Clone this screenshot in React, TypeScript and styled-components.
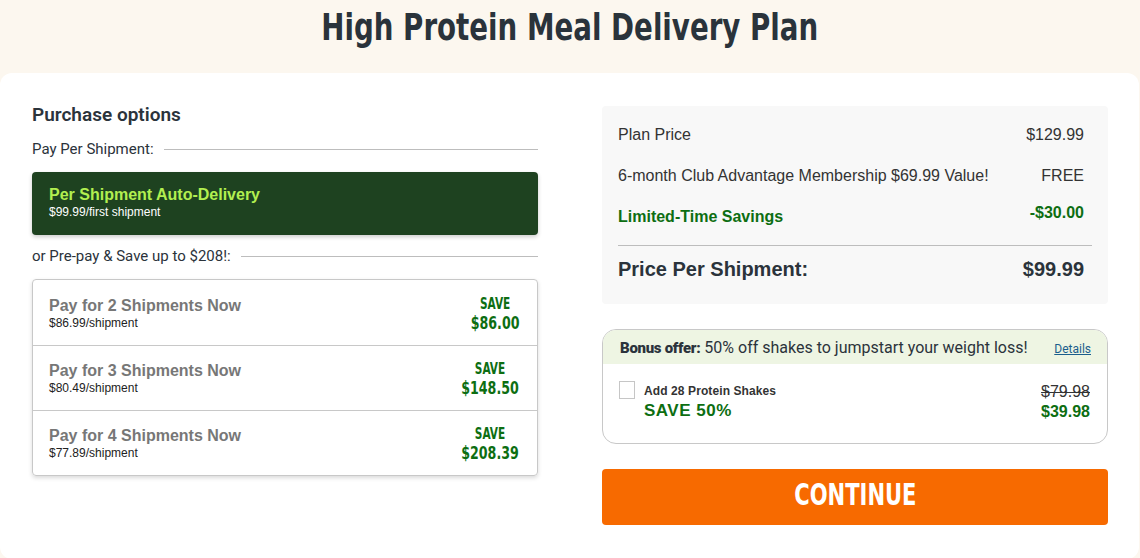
import React from "react";
import styled, { createGlobalStyle } from "styled-components";

const Global = createGlobalStyle`
  html, body { margin: 0; padding: 0; }
  body {
    background: #fcf7ef;
    font-family: "Liberation Sans", Arial, sans-serif;
    color: #2b333b;
    width: 1140px;
    height: 558px;
    overflow: hidden;
  }
`;

const condensed = `"DejaVu Sans Condensed", "Liberation Sans", sans-serif`;

const Header = styled.header`
  height: 73px;
  display: flex;
  align-items: center;
  justify-content: center;
`;

const Title = styled.h1`
  margin: 0;
  padding-bottom: 20px;
  font-family: ${condensed};
  font-weight: 700;
  font-size: 38px;
  color: #2a333b;
  transform: scaleX(0.81);
  white-space: nowrap;
`;

const Card = styled.main`
  background: #fff;
  border-radius: 12px;
  width: 1139px;
  height: 486px;
  box-sizing: border-box;
  padding: 30px 32px 0 32px;
  display: grid;
  grid-template-columns: 506px 506px;
  column-gap: 64px;
  align-items: start;
`;

const Column = styled.section`
  display: flex;
  flex-direction: column;
`;

const SectionTitle = styled.h2`
  margin: 0 0 12px 0;
  font-family: Roboto, "Noto Sans", sans-serif;
  font-weight: 600;
  font-size: 19px;
  line-height: 24px;
  color: #2b333b;
`;

const Divider = styled.div`
  display: flex;
  align-items: center;
  gap: 10px;
  font-family: Roboto, "Noto Sans", sans-serif;
  font-size: 15px;
  line-height: 20px;
  color: #2b333b;
  margin-bottom: 13px;
  &::after {
    content: "";
    flex: 1;
    height: 1px;
    background: #bdbdbd;
  }
`;

const AutoBox = styled.div`
  background: #1e4220;
  border-radius: 4px;
  box-shadow: 0 2px 4px rgba(0, 0, 0, 0.2);
  height: 63px;
  box-sizing: border-box;
  padding: 13px 17px 0;
  margin-bottom: 11px;
`;

const AutoTitle = styled.div`
  color: #b2ef50;
  font-weight: 700;
  font-size: 16px;
  line-height: 19px;
`;

const AutoSub = styled.div`
  color: #fff;
  font-size: 12px;
  line-height: 17px;
`;

const OptionList = styled.div`
  border: 1px solid #c8c8c8;
  border-radius: 4px;
  box-shadow: 0 2px 4px rgba(0, 0, 0, 0.15);
`;

const OptionRow = styled.div`
  height: 65px;
  box-sizing: border-box;
  display: flex;
  align-items: center;
  justify-content: space-between;
  padding: 0 18px 0 16px;
  & + & {
    border-top: 1px solid #c8c8c8;
  }
`;

const OptionText = styled.div`
  display: flex;
  flex-direction: column;
  padding-top: 1px;
`;

const OptionTitle = styled.div`
  color: #777;
  font-weight: 700;
  font-size: 16px;
  line-height: 20px;
`;

const OptionSub = styled.div`
  color: #222;
  font-size: 12px;
  line-height: 15px;
`;

const Save = styled.div`
  display: flex;
  flex-direction: column;
  align-items: center;
  color: #0d6e12;
  font-family: ${condensed};
  font-weight: 700;
  padding-top: 2px;
  transform: scaleX(0.78);
  transform-origin: right center;
`;

const SaveLabel = styled.span`
  font-size: 15px;
  line-height: 18px;
`;

const SaveAmount = styled.span`
  font-size: 18px;
  line-height: 20px;
`;

const Summary = styled.div`
  background: #f8f8f8;
  border-radius: 4px;
  height: 198px;
  margin-top: 3px;
  box-sizing: border-box;
  padding: 8px 24px 0 16px;
  display: flex;
  flex-direction: column;
`;

const SummaryRow = styled.div<{ $green?: boolean }>`
  display: flex;
  justify-content: space-between;
  align-items: ${(p) => (p.$green ? "flex-start" : "center")};
  height: 41px;
  font-size: 16px;
  line-height: 24px;
  color: ${(p) => (p.$green ? "#0d6e12" : "#333")};
  font-weight: ${(p) => (p.$green ? 700 : 400)};
  & > span:first-child {
    padding-top: ${(p) => (p.$green ? "9px" : "0")};
  }
  & > span:last-child {
    padding-top: ${(p) => (p.$green ? "5px" : "0")};
  }
`;

const TotalRow = styled.div`
  margin-right: -8px;
  margin-top: 8px;
  border-top: 1px solid #bdbdbd;
  display: flex;
  justify-content: space-between;
  padding: 11px 8px 0 0;
  font-size: 20px;
  line-height: 24px;
  font-weight: 700;
  color: #2b333b;
`;

const Bonus = styled.div`
  margin-top: 25px;
  border: 1px solid #c8c8c8;
  border-radius: 14px;
  overflow: hidden;
  height: 115px;
  box-sizing: border-box;
`;

const BonusHead = styled.div`
  background: #eef5e3;
  height: 34px;
  display: flex;
  align-items: center;
  justify-content: space-between;
  padding: 0 16px 0 17px;
  font-family: Roboto, "Noto Sans", sans-serif;
  font-size: 16px;
  color: #2b333b;
`;

const BonusStrong = styled.strong`
  font-family: Roboto, "Noto Sans", sans-serif;
  font-weight: 900;
  font-size: 15px;
  letter-spacing: -0.3px;
`;

const Details = styled.a`
  font-family: Roboto, "Noto Sans", sans-serif;
  font-size: 12px;
  color: #1b5e8c;
  text-decoration: underline;
  padding-top: 4px;
`;

const BonusBody = styled.div`
  display: flex;
  justify-content: space-between;
  padding: 17px 16px 0 16px;
`;

const CheckWrap = styled.label`
  display: flex;
  gap: 9px;
`;

const Check = styled.span`
  width: 16px;
  height: 18px;
  box-sizing: border-box;
  border: 1px solid #c6c6c6;
  background: #fff;
`;

const ShakeText = styled.div`
  display: flex;
  flex-direction: column;
  padding-top: 1px;
`;

const ShakeTitle = styled.span`
  font-size: 12px;
  font-weight: 700;
  letter-spacing: 0.1px;
  color: #333;
  line-height: 18px;
`;

const ShakeSave = styled.span`
  font-size: 17px;
  font-weight: 700;
  color: #0d6e12;
  line-height: 22px;
  letter-spacing: 0.5px;
`;

const Prices = styled.div`
  display: flex;
  flex-direction: column;
  align-items: flex-end;
  padding-right: 1px;
  padding-top: 1px;
`;

const OldPrice = styled.s`
  font-size: 16px;
  color: #333;
  line-height: 20px;
`;

const NewPrice = styled.span`
  font-size: 16px;
  font-weight: 700;
  color: #0d6e12;
  line-height: 20px;
`;

const Continue = styled.button`
  margin-top: 25px;
  height: 56px;
  border: none;
  border-radius: 4px;
  background: #f76a00;
  color: #fff;
  font-family: ${condensed};
  font-weight: 700;
  font-size: 30px;
  padding: 0 0 5px 0;
  cursor: pointer;
`;

const ButtonLabel = styled.span`
  display: inline-block;
  transform: scaleX(0.78);
`;

const options = [
  { n: 2, price: "$86.99", save: "$86.00" },
  { n: 3, price: "$80.49", save: "$148.50" },
  { n: 4, price: "$77.89", save: "$208.39" },
];

export default function App() {
  return (
    <>
      <Global />
      <Header>
        <Title>High Protein Meal Delivery Plan</Title>
      </Header>
      <Card>
        <Column>
          <SectionTitle>Purchase options</SectionTitle>
          <Divider>Pay Per Shipment:</Divider>
          <AutoBox>
            <AutoTitle>Per Shipment Auto-Delivery</AutoTitle>
            <AutoSub>$99.99/first shipment</AutoSub>
          </AutoBox>
          <Divider>or Pre-pay &amp; Save up to $208!:</Divider>
          <OptionList>
            {options.map((o) => (
              <OptionRow key={o.n}>
                <OptionText>
                  <OptionTitle>Pay for {o.n} Shipments Now</OptionTitle>
                  <OptionSub>{o.price}/shipment</OptionSub>
                </OptionText>
                <Save>
                  <SaveLabel>SAVE</SaveLabel>
                  <SaveAmount>{o.save}</SaveAmount>
                </Save>
              </OptionRow>
            ))}
          </OptionList>
        </Column>
        <Column>
          <Summary>
            <SummaryRow>
              <span>Plan Price</span>
              <span>$129.99</span>
            </SummaryRow>
            <SummaryRow>
              <span>6-month Club Advantage Membership $69.99 Value!</span>
              <span>FREE</span>
            </SummaryRow>
            <SummaryRow $green>
              <span>Limited-Time Savings</span>
              <span>-$30.00</span>
            </SummaryRow>
            <TotalRow>
              <span>Price Per Shipment:</span>
              <span>$99.99</span>
            </TotalRow>
          </Summary>
          <Bonus>
            <BonusHead>
              <span>
                <BonusStrong>Bonus offer:</BonusStrong> 50% off shakes to jumpstart your weight loss!
              </span>
              <Details href="#">Details</Details>
            </BonusHead>
            <BonusBody>
              <CheckWrap>
                <Check />
                <ShakeText>
                  <ShakeTitle>Add 28 Protein Shakes</ShakeTitle>
                  <ShakeSave>SAVE 50%</ShakeSave>
                </ShakeText>
              </CheckWrap>
              <Prices>
                <OldPrice>$79.98</OldPrice>
                <NewPrice>$39.98</NewPrice>
              </Prices>
            </BonusBody>
          </Bonus>
          <Continue>
            <ButtonLabel>CONTINUE</ButtonLabel>
          </Continue>
        </Column>
      </Card>
    </>
  );
}
